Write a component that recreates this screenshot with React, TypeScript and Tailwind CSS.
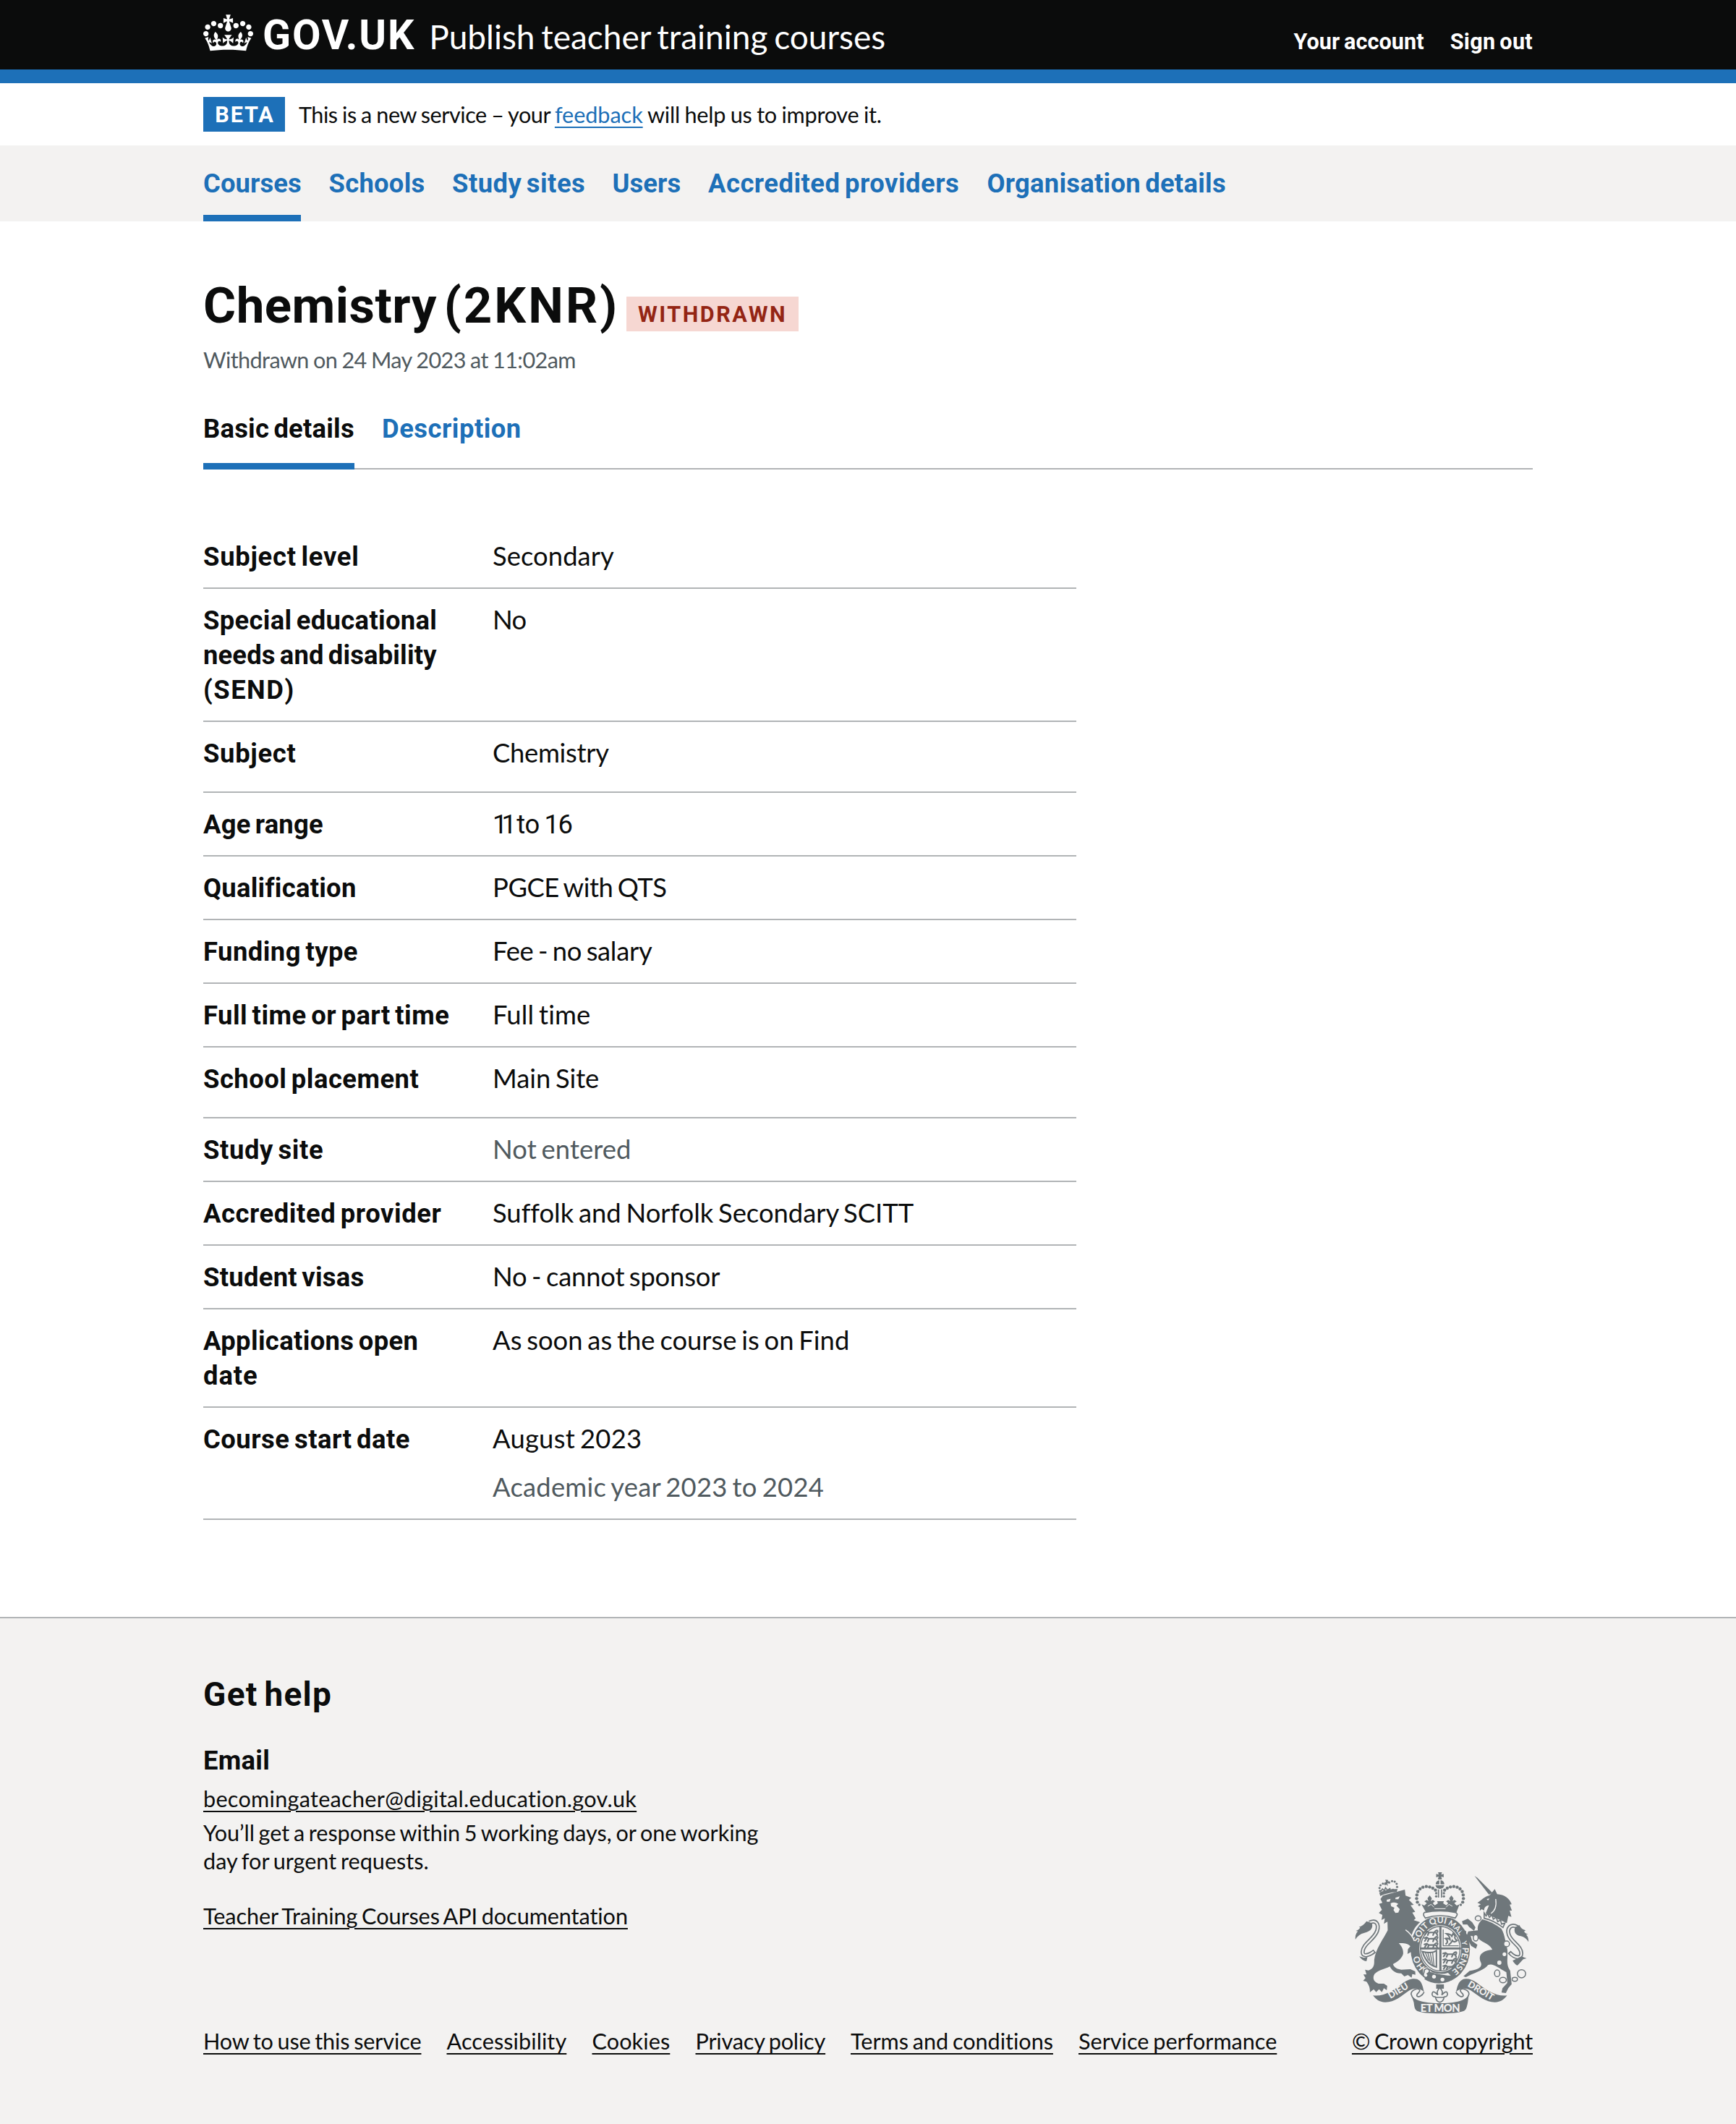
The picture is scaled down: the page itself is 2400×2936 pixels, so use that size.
function Crown() {
  return (
    <svg viewBox="0 0 132 97" className="h-[51px] w-[69px] shrink-0 fill-white">
      <path
        fillRule="evenodd"
        d="M25 30.2c3.5 1.5 7.7-.2 9.1-3.7 1.5-3.6-.2-7.8-3.9-9.2-3.6-1.4-7.6.3-9.1 3.9-1.4 3.5.3 7.5 3.9 9zM9 39.5c3.6 1.5 7.8-.2 9.2-3.7 1.5-3.6-.2-7.8-3.9-9.1-3.6-1.5-7.6.2-9.1 3.8-1.4 3.5.3 7.5 3.8 9zM4.4 57.2c3.5 1.5 7.7-.2 9.1-3.8 1.5-3.6-.2-7.7-3.9-9.1-3.5-1.5-7.6.3-9.1 3.8-1.4 3.5.3 7.6 3.9 9.1zm38.3-21.4c3.5 1.5 7.7-.2 9.1-3.8 1.5-3.6-.2-7.7-3.9-9.1-3.6-1.5-7.6.3-9.1 3.8-1.3 3.6.4 7.7 3.9 9.1zm64.4-5.6c-3.6 1.5-7.8-.2-9.1-3.7-1.5-3.6.2-7.8 3.8-9.2 3.6-1.4 7.7.3 9.2 3.9 1.3 3.5-.4 7.5-3.9 9zm15.9 9.3c-3.6 1.5-7.7-.2-9.1-3.7-1.5-3.6.2-7.8 3.7-9.1 3.6-1.5 7.7.2 9.2 3.8 1.5 3.5-.3 7.5-3.8 9zm4.7 17.7c-3.6 1.5-7.8-.2-9.2-3.8-1.5-3.6.2-7.7 3.9-9.1 3.6-1.5 7.7.3 9.2 3.8 1.3 3.5-.4 7.6-3.9 9.1zM89.3 35.8c-3.6 1.5-7.8-.2-9.2-3.8-1.4-3.6.2-7.7 3.9-9.1 3.6-1.5 7.7.3 9.2 3.8 1.4 3.6-.3 7.7-3.9 9.1zM69.7 17.7l8.9 4.7V9.3l-8.9 2.8c-.2-.3-.5-.6-.9-.9L72.4 0H59.6l3.5 11.2c-.3.3-.6.5-.9.9l-8.8-2.8v13.1l8.8-4.7c.3.3.6.7.9.9l-5 15.4v.1c-.2.8-.4 1.6-.4 2.4 0 4.1 3.1 7.5 7 8.1h.2c.3 0 .7.1 1 .1.4 0 .7 0 1-.1h.2c4-.6 7.1-4.1 7.1-8.1 0-.8-.1-1.7-.4-2.4V34l-5.1-15.4c.4-.2.7-.6 1-.9zM66 92.8c16.9 0 32.8 1.1 47.1 3.2 4-16.9 8.9-26.7 14-33.5l-9.6-3.4c1 4.9 1.1 7.2 0 10.2-1.5-1.4-3-4.3-4.2-8.7L108.6 76c2.8-2 5-3.2 7.5-3.3-4.4 9.4-10 11.9-13.6 11.2-4.3-.8-6.3-4.6-5.6-7.9 1-4.7 5.7-5.9 8-.5 4.3-8.7-3-11.4-7.6-8.8 7.1-7.2 7.9-13.5 2.1-21.1-8 6.1-8.1 12.3-4.5 20.8-4.7-5.4-12.1-2.5-9.5 6.2 3.4-5.2 7.9-2 7.2 3.1-.6 4.3-6.4 7.8-13.5 7.2-10.3-.9-10.9-8-11.2-13.8 2.5-.5 7.1 1.8 11 7.3L80.2 60c-4.1 4.4-8 5.3-12.3 5.4 1.4-4.4 8-11.6 8-11.6H55.5s6.4 7.2 7.9 11.6c-4.2-.1-8-1-12.3-5.4l1.4 16.4c3.9-5.5 8.5-7.7 10.9-7.3-.3 5.8-.9 12.8-11.1 13.8-7.2.6-12.9-2.9-13.5-7.2-.7-5 3.8-8.3 7.1-3.1 2.7-8.7-4.6-11.6-9.4-6.2 3.7-8.5 3.6-14.7-4.6-20.8-5.8 7.6-5 13.9 2.2 21.1-4.7-2.6-11.9.1-7.7 8.8 2.3-5.5 7.1-4.2 8.1.5.7 3.3-1.3 7.1-5.7 7.9-3.5.7-9-1.8-13.5-11.2 2.5.1 4.7 1.3 7.5 3.3l-4.7-15.4c-1.2 4.4-2.7 7.2-4.3 8.7-1.1-3-.9-5.3 0-10.2l-9.5 3.4c5 6.9 9.9 16.7 14 33.5 14.8-2.1 30.8-3.2 47.7-3.2z"
      />
    </svg>
  );
}

const G = "#6f777b";
const B = "#f3f2f1";

const pearls: [number, number][] = [
  [329, 205], [326, 190], [327, 175], [331, 161], [340, 150], [352, 143], [366, 140], [380, 142], [393, 147], [404, 155],
];

/* One quarter of the shield holding three walking lions. */
function Lions({ x, y }: { x: number; y: number }) {
  return (
    <g transform={`translate(${x} ${y})`} fill="none" stroke={G} strokeWidth="6.5" strokeLinecap="round">
      {[0, 26, 52].map((d) => (
        <path
          key={d}
          transform={`translate(0 ${d})`}
          d="M4 6 L14 3 L22 9 L44 8 L56 12 M12 9 L6 18 M22 10 L18 20 M44 9 L40 20 M54 12 L58 20 M46 7 C54 -4 62 0 58 7"
        />
      ))}
    </g>
  );
}

function Arms() {
  return (
    <svg viewBox="70 78 722 594" className="h-[198px] w-[241px]" fill={G}>
      {/* crest crown */}
      <path d="M415 81h16l-3 10 10-3v14l-10-3 3 12h-17l3-12-10 3V88l10 3z" />
      <path d="M405 131a18 18 0 0 1 15-17v17zM425 114a18 18 0 0 1 16 17h-16zM404 135h37a19 19 0 0 1-37 0z" />
      <path d="M414 152h5v34h-5zM427 152h5v34h-5z" />
      {pearls.map(([x, y]) => (
        <g key={x + "-" + y}>
          <circle cx={x} cy={y} r="6.6" />
          <circle cx={846 - x} cy={y} r="6.6" />
        </g>
      ))}
      {[[337, 216], [509, 216], [407, 168], [407, 181], [439, 168], [439, 181]].map(([x, y]) => (
        <circle key={x + "+" + y} cx={x} cy={y} r="5" />
      ))}
      <path d="M346 214l12 5 10-10-10-7 10-6 7 5-4-12 9-12 9 12-4 12 8-5 9 6-9 7 8 9 13-8-3-9h28l-3 9 13 8 8-9-9-7 9-6 8 5-4-12 9-12 9 12-4 12 7-5 10 6-10 7 10 10 12-5-14 36q-65-14-124 0z" />
      <path d="M372 222l14-8 12 12M474 222l-14-8-12 12M400 232h46" fill="none" stroke={B} strokeWidth="3" />

      {/* garter and shield */}
      <ellipse cx="424" cy="400" rx="123" ry="140" />
      <path d="M340 262q84-44 168 0l-14 14q-70-18-140 0z" fill={B} />
      <path
        d="M358 248q66-14 130 0 10 6 4 14l-6 9q-62-20-124 0l-7-11q-2-8 3-12z"
        fill={B}
        stroke={G}
        strokeWidth="5"
      />
      <ellipse cx="424" cy="398" rx="87" ry="97" fill={B} />
      <ellipse cx="424" cy="398" rx="82" ry="92" fill="none" stroke={G} strokeWidth="4" />
      <path d="M420 304h9v188h-9zM340 393h170v8H340z" />
      <Lions x={354} y={322} />
      <Lions x={432} y={412} />
      <path d="M436 318v68h64" fill="none" stroke={G} strokeWidth="4" />
      <path
        d="M446 380c12-8 8-18 0-24 8-2 14 0 18 4 0-10-6-18-14-24 12 0 18 4 22 10l6-12 8 12c-4 8-2 12 8 18-8 8-16 6-20 0-4 8-6 14-16 18"
        fill="none"
        stroke={G}
        strokeWidth="6.5"
      />
      <path d="M350 410q40 10 58-4v68q-40-8-58-64z" fill="none" stroke={G} strokeWidth="6" />
      <path d="M362 414l14 34M372 414l12 44M382 413l10 54M392 411l6 58" stroke={G} strokeWidth="4" />
      <path id="garter" d="M424 504A92 106 0 0 1 424 292A92 106 0 0 1 424 504" fill="none" />
      <g fill={B} fontFamily="Lato, sans-serif" fontWeight="700" fontSize="36" textAnchor="middle">
        <text><textPath href="#garter" startOffset="16%">HO</textPath></text>
        <text><textPath href="#garter" startOffset="35.5%">SOIT</textPath></text>
        <text><textPath href="#garter" startOffset="48.5%">QUI</textPath></text>
        <text fontSize="32"><textPath href="#garter" startOffset="60.5%">MAL</textPath></text>
        <text fontSize="28"><textPath href="#garter" startOffset="71.5%">Y</textPath></text>
        <text><textPath href="#garter" startOffset="83%">PENSE</textPath></text>
      </g>
      <path d="M352 480q20-12 28 6l10 10q40 12 66 2l24 24q-30 22-70 22-40-4-56-24z" fill={B} />
      <path d="M374 492q60 20 120 18-30 32-76 32-36-2-60-18z" />
      <path d="M358 486q14-12 22 4-4 10-10 12 8 8-4 16-14-2-12-14 4-8 4-18z" fill={B} stroke={G} strokeWidth="5" />
      <circle cx="398" cy="514" r="8" fill={B} />
      <circle cx="433" cy="526" r="8" fill={B} />

      {/* lion */}
      <path d="M171 165q34-16 76-14l-4 12q-34 2-68 16z" />
      <path d="M178 160l6-10 8 8 5-13 8 10 10-6 2 11 11-8 6 10" fill="none" stroke={G} strokeWidth="5" />
      {[[174, 158], [172, 146], [176, 135], [186, 128], [196, 130], [212, 124], [224, 118], [235, 120], [243, 129], [245, 142]].map(([x, y]) => (
        <circle key={x} cx={x} cy={y} r="4.6" />
      ))}
      <path d="M196 112l12 1-2 6 7-1-1 9-7-2 1 14-7-9-8 1 2-8 6-1z" />
      <path d="M176 192L186 178 277 153 280 178 304 187 294 196 314 216 301 218 320 245 308 248 322 272 314 280 340 288C322 304 310 322 304 346L320 372 332 424 318 413 308 426 302 412 288 420 290 400 300 388C290 376 275 374 252 375 262 386 272 400 270 420 262 445 240 455 228 462 232 476 245 483 262 485L300 483 320 492 321 506 308 503 305 518 290 507 275 513 262 500C240 502 222 488 215 472 190 484 155 490 148 510 144 525 150 536 168 543L190 543 204 552 202 570 190 562 182 578 170 566 158 578 148 566 132 579C134 558 125 545 118 535L104 531 114 520 105 505 118 505 112 485 126 488C152 480 150 460 150 445 155 400 190 355 206 322L205 286 190 295 194 272 180 279 184 258 169 250 182 237 170 212 184 208Z" />
      <path d="M202 195l16-4-4 12-12 0zM238 187l18-6-6 12-12 0zM218 210q16-8 32 2l-8 8 14 14-6 14-12 2-8-12 4-10-14-6z" fill={B} />
      <path d="M280 320q26 18 36 46" fill="none" stroke={B} strokeWidth="4" />
      <path d="M130 290c30-14 40 8 32 34-12 36-60 54-60 88 0 20 24 16 50-4" fill="none" stroke={G} strokeWidth="17" />
      <path d="M130 290c30-14 40 8 32 34-12 36-60 54-60 88 0 20 24 16 46-2" fill="none" stroke={B} strokeWidth="7" />
      <path d="M118 284l22 8q10 30-30 40-26 6-38 28-2-22 10-34l-8-2q14-4 18-14l-6-2q18-4 32-24zM88 430l20 6 14-4-4 18q-16 0-30-20z" />

      {/* unicorn */}
      <path d="M566 96l12 8 62 62-14 8z" />
      <path d="M578 208C596 196 606 182 628 177L650 151 660 172C690 174 712 190 720 214L712 215 721 240 712 240 719 266 706 262 700 292 612 252 626 218C612 220 606 226 606 240L596 234 588 241 588 226 580 222 592 214Z" />
      <path d="M634 252q26-16 20-60" fill="none" stroke={B} strokeWidth="4" />
      <path d="M616 192l12-2-6 8z" fill={B} />
      <path d="M606 250l8 12 6-10 8 16 10-10 6 18 12-8 6 18 12-6 4 16 14-4-8 18q-40-30-78-38z" fill={B} stroke={G} strokeWidth="5" />
      <path d="M598 276Q640 286 678 316C694 345 694 375 702 400 706 440 694 462 714 490L720 545 706 562 696 582 678 580 682 562 702 540 698 496C664 476 640 456 622 466 606 488 560 500 530 516L520 512 546 490C580 486 604 474 590 450 580 420 604 406 640 402 626 374 590 372 580 352L550 344 556 366 578 382 572 398 552 386 532 348 540 326 580 322C576 306 584 290 598 276Z" />
      <path d="M514 284l24-10 18 14 14 22-6 14-20-16-8-10-18 0z" />
      <path d="M532 326l-14-8-12 12 8 14 14 8" />
      <g fill={B} stroke={G} strokeWidth="4.5">
        <ellipse cx="581" cy="272" rx="12" ry="10" />
        <ellipse cx="571" cy="353" rx="10" ry="13" />
        <circle cx="699" cy="378" r="12" />
        <circle cx="690" cy="421" r="10" />
        <circle cx="669" cy="456" r="11" />
        <ellipse cx="660" cy="500" rx="11" ry="14" />
        <ellipse cx="684" cy="528" rx="14" ry="11" />
        <ellipse cx="733" cy="525" rx="11" ry="8" />
        <circle cx="761" cy="502" r="17" />
      </g>
      <path d="M744 308c-30-16-44 8-36 32 12 34 52 46 52 78 0 24-28 18-50-6" fill="none" stroke={G} strokeWidth="17" />
      <path d="M744 308c-30-16-44 8-36 32 12 34 52 46 52 78 0 24-28 18-46-2" fill="none" stroke={B} strokeWidth="7" />
      <path d="M752 300l-18 8q-10 30 24 38 20 4 32 24 0-22-10-30l8-2q-14-4-16-12l6-4q-18-4-26-22zM724 448q16 24 22 18l22-24 14-4-22-8z" />

      {/* motto ribbon */}
      <path d="M145 592C190 598 232 570 262 546 290 522 322 516 338 530 350 542 352 560 357 578 340 558 312 560 294 572 262 594 236 620 196 620 170 620 158 608 145 592ZM701 592C658 598 616 570 584 546 556 522 526 516 510 530 496 542 494 560 489 578 506 558 534 560 552 572 584 594 612 620 650 620 676 620 688 608 701 592Z" />
      <path d="M357 578c-8 16-24 24-30 16-4-10 14-14 12-24-8-12-36 0-36 16 4 18 16 22 22 36M489 578c8 16 24 24 30 16 4-10-14-14-12-24 8-12 36 0 36 16-4 18-16 22-22 36" fill="none" stroke={G} strokeWidth="5" />
      <path d="M304 590C318 616 370 624 424 624S526 616 542 590L538 622C534 640 532 652 522 656 490 670 356 670 328 656 316 650 316 632 314 620Z" />
      <g fill={B} fontFamily="Lato, sans-serif" fontWeight="900" fontSize="38" textAnchor="middle">
        <text transform="translate(256 583) rotate(-31)">DIEU</text>
        <text transform="translate(586 583) rotate(31)">DROIT</text>
        <text x="424" y="660" fontSize="44" textLength="164">ET MON</text>
      </g>
      <path d="M407 546h32v18h-32z" />
      <path
        d="M422 560q16 16 8 30 22-24 24-4 0 12-14 12l-2 8q-4 12-16 14-12-2-16-14l-2-8q-14 0-14-12 2-20 24 4-8-14 8-30zM404 600h36"
        fill={B}
        stroke={G}
        strokeWidth="5"
      />
    </svg>
  );
}

const nav = [
  { label: "Courses", cls: "w-[135px] tracking-[0.1px]", current: true },
  { label: "Schools", cls: "w-[132px] tracking-[0.26px]" },
  { label: "Study sites", cls: "w-[183px] tracking-[0.48px]" },
  { label: "Users", cls: "w-[94px] tracking-[0.09px]" },
  { label: "Accredited providers", cls: "w-[347px] tracking-[0.49px]" },
  { label: "Organisation details", cls: "w-[330px] tracking-[0.25px]" },
];

type Row = {
  k: { t: string; cls: string }[];
  v: React.ReactNode;
  vc: string;
  list?: boolean;
  hint?: boolean;
  extra?: string;
};

const ageRange = (
  <span className="font-['Roboto'] tracking-[-0.2px]">
    <span className="tracking-[-8px]">11</span> <span className="ml-[2px]">to</span>{" "}
    <span className="tracking-[-1.5px]">16</span>
  </span>
);

const rows: Row[] = [
  { k: [{ t: "Subject level", cls: "tracking-[0.72px]" }], v: "Secondary", vc: "tracking-[0.06px]" },
  {
    k: [
      { t: "Special educational", cls: "tracking-[0.32px]" },
      { t: "needs and disability", cls: "tracking-[0.15px]" },
      { t: "(SEND)", cls: "tracking-[1.5px]" },
    ],
    v: "No",
    vc: "tracking-[-0.6px]",
  },
  { k: [{ t: "Subject", cls: "tracking-[0.68px]" }], v: "Chemistry", vc: "tracking-[-0.3px]", list: true },
  { k: [{ t: "Age range", cls: "tracking-[0.2px]" }], v: ageRange, vc: "" },
  { k: [{ t: "Qualification", cls: "tracking-[0.26px]" }], v: "PGCE with QTS", vc: "tracking-[-0.46px]" },
  { k: [{ t: "Funding type", cls: "tracking-[0.46px]" }], v: "Fee - no salary", vc: "tracking-[-0.3px]" },
  { k: [{ t: "Full time or part time", cls: "tracking-[0.47px]" }], v: "Full time", vc: "tracking-[0.1px]" },
  { k: [{ t: "School placement", cls: "tracking-[0.48px]" }], v: "Main Site", vc: "tracking-[-0.05px]", list: true },
  { k: [{ t: "Study site", cls: "tracking-[0.6px]" }], v: "Not entered", vc: "tracking-[0.05px]", hint: true },
  { k: [{ t: "Accredited provider", cls: "tracking-[0.56px]" }], v: "Suffolk and Norfolk Secondary SCITT", vc: "tracking-[-0.02px]" },
  { k: [{ t: "Student visas", cls: "tracking-[0.28px]" }], v: "No - cannot sponsor", vc: "tracking-[-0.2px]" },
  {
    k: [
      { t: "Applications open", cls: "tracking-[0.36px]" },
      { t: "date", cls: "tracking-[0.9px]" },
    ],
    v: "As soon as the course is on Find",
    vc: "tracking-[0px]",
  },
  {
    k: [{ t: "Course start date", cls: "tracking-[0.5px]" }],
    v: "August 2023",
    vc: "tracking-[0.24px]",
    extra: "Academic year 2023 to 2024",
  },
];

const links = [
  { label: "How to use this service", cls: "w-[301.5px] tracking-[-0.12px]" },
  { label: "Accessibility", cls: "w-[166px] tracking-[0.08px]" },
  { label: "Cookies", cls: "w-[108px] tracking-[0.1px]" },
  { label: "Privacy policy", cls: "w-[179.5px] tracking-[-0.18px]" },
  { label: "Terms and conditions", cls: "w-[280px] tracking-[-0.02px]" },
  { label: "Service performance", cls: "w-[274px] tracking-[0px]" },
];

const linkLine = "underline decoration-2 underline-offset-[5px]";

export default function App() {
  return (
    <div className="min-h-[2936px] w-[2400px] bg-white font-['Lato',sans-serif] text-[#0b0c0c] [font-variant-ligatures:none]">
      <header className="h-[115px] border-b-[19px] border-[#1d70b8] bg-[#0b0c0c] px-[281px] text-white">
        <div className="flex h-[96px] items-start justify-between">
          <div className="flex items-start">
            <div className="pt-[20px]">
              <Crown />
            </div>
            <span className="ml-[13px] mt-[15px] font-['Roboto'] text-[57.4px] font-bold leading-[68px] tracking-[1.8px]">GOV.UK</span>
            <span className="ml-[19px] mt-[22px] text-[46px] leading-[58px] [word-spacing:-3px]">
              Publish teacher training courses
            </span>
          </div>
          <div className="flex gap-[36px] pt-[39px] font-['Roboto'] text-[30.6px] font-bold leading-[38px]">
            <span className="tracking-[0.08px] [word-spacing:-2px]">Your account</span>
            <span className="tracking-[0.3px] [word-spacing:-2px]">Sign out</span>
          </div>
        </div>
      </header>

      <div className="flex h-[86px] items-center px-[281px]">
        <strong className="flex h-[48px] w-[113px] items-center justify-center bg-[#1d70b8] pl-[2px] pt-[2px] font-['Roboto'] text-[30.6px] font-bold leading-[46px] tracking-[1.9px] text-white">
          BETA
        </strong>
        <p className="ml-[19px] mt-[1px] text-[30.6px] leading-[38px] tracking-[-0.45px] [word-spacing:-1px]">
          This is a new service – your{" "}
          <a className={`tracking-[-0.05px] text-[#1d70b8] ${linkLine}`}>feedback</a>{" "}
          <span className="tracking-[-0.24px]">will help us to improve it.</span>
        </p>
      </div>

      <nav className="flex h-[105px] gap-[38.5px] bg-[#f3f2f1] px-[281px] font-['Roboto'] text-[36.4px] font-bold text-[#1d70b8] [word-spacing:-3px]">
        {nav.map((n) => (
          <a
            key={n.label}
            className={`whitespace-nowrap pt-[29px] leading-[48px] ${n.cls} ${n.current ? "border-b-[9px] border-[#1d70b8]" : ""}`}
          >
            {n.label}
          </a>
        ))}
      </nav>

      <main className="px-[281px] pt-[77px]">
        <h1 className="flex items-end font-['Roboto'] leading-[80px]">
          <span className="w-[572px] whitespace-nowrap text-[69px] font-bold tracking-[0.5px] [word-spacing:-8px]">
            Chemistry <span className="tracking-[3px]">(2KNR)</span>
          </span>
          <strong className="mb-[5px] ml-[13px] flex h-[48px] w-[238px] items-center justify-center bg-[#f6d7d2] pt-[2px] text-[30.6px] font-bold tracking-[2.5px] text-[#942514]">
            WITHDRAWN
          </strong>
        </h1>
        <p className="mt-[16px] text-[30.6px] leading-[38px] tracking-[-0.6px] text-[#505a5f] [word-spacing:-1px]">
          Withdrawn on 24 May 2023 at 11:02am
        </p>

        <div className="mt-[46px] flex h-[86px] gap-[38px] border-b-2 border-[#b1b4b6] font-['Roboto'] text-[36.4px] font-bold leading-[48px] [word-spacing:-3px]">
          <a className="-mb-[2px] w-[209px] whitespace-nowrap border-b-[9px] border-[#1d70b8] pt-[6px] tracking-[0.23px]">Basic details</a>
          <a className="pt-[6px] tracking-[0.5px] text-[#1d70b8]">Description</a>
        </div>

        <dl className="mt-[77px] w-[1207px]">
          {rows.map((r) => (
            <div key={r.k[0].t} className="flex border-b-2 border-[#b1b4b6] text-[36.4px] leading-[48px]">
              <dt className="w-[400px] pb-[18px] pt-[20px] font-['Roboto'] font-bold [word-spacing:-3px]">
                {r.k.map((line) => (
                  <div key={line.t} className={line.cls}>
                    {line.t}
                  </div>
                ))}
              </dt>
              <dd className={`pb-[20px] pt-[18px] [word-spacing:-2.5px] ${r.vc}`}>
                <p className={`h-[48px] ${r.hint ? "text-[#505a5f]" : ""} ${r.list ? "mb-[10px]" : ""}`}>{r.v}</p>
                {r.extra && <p className="mt-[19px] tracking-[0.23px] text-[#505a5f]">{r.extra}</p>}
              </dd>
            </div>
          ))}
        </dl>
      </main>

      <footer className="mt-[134px] flex h-[701px] items-end justify-between border-t-2 border-[#b1b4b6] bg-[#f3f2f1] px-[281px] pb-[95px]">
        <div>
          <h2 className="font-['Roboto'] text-[46px] font-bold leading-[58px] tracking-[1.3px] [word-spacing:-4px]">Get help</h2>
          <h3 className="mt-[39px] font-['Roboto'] text-[36.4px] font-bold leading-[48px] tracking-[0.3px]">Email</h3>
          <p className="mt-[10px] text-[30.6px] leading-[38px] tracking-[0.28px]">
            <a className={linkLine}>becomingateacher@digital.education.gov.uk</a>
          </p>
          <div className="mt-[9px] text-[30.6px] leading-[38.5px] [word-spacing:-2px]">
            <p className="tracking-[-0.05px]">You’ll get a response within 5 working days, or one working</p>
            <p className="tracking-[0px]">day for urgent requests.</p>
          </div>
          <p className="mt-[38px] text-[30.6px] leading-[38px] tracking-[-0.07px] [word-spacing:-2px]">
            <a className={linkLine}>Teacher Training Courses API documentation</a>
          </p>
          <div className="mt-[135px] flex gap-[35px] text-[30.6px] leading-[38px] [word-spacing:-2px]">
            {links.map((l) => (
              <a key={l.label} className={`whitespace-nowrap ${linkLine} ${l.cls}`}>
                {l.label}
              </a>
            ))}
          </div>
        </div>
        <div className="flex flex-col items-center">
          <Arms />
          <a className={`mt-[18px] text-[30.6px] leading-[38px] tracking-[-0.15px] [word-spacing:-2px] ${linkLine}`}>© Crown copyright</a>
        </div>
      </footer>
    </div>
  );
}
